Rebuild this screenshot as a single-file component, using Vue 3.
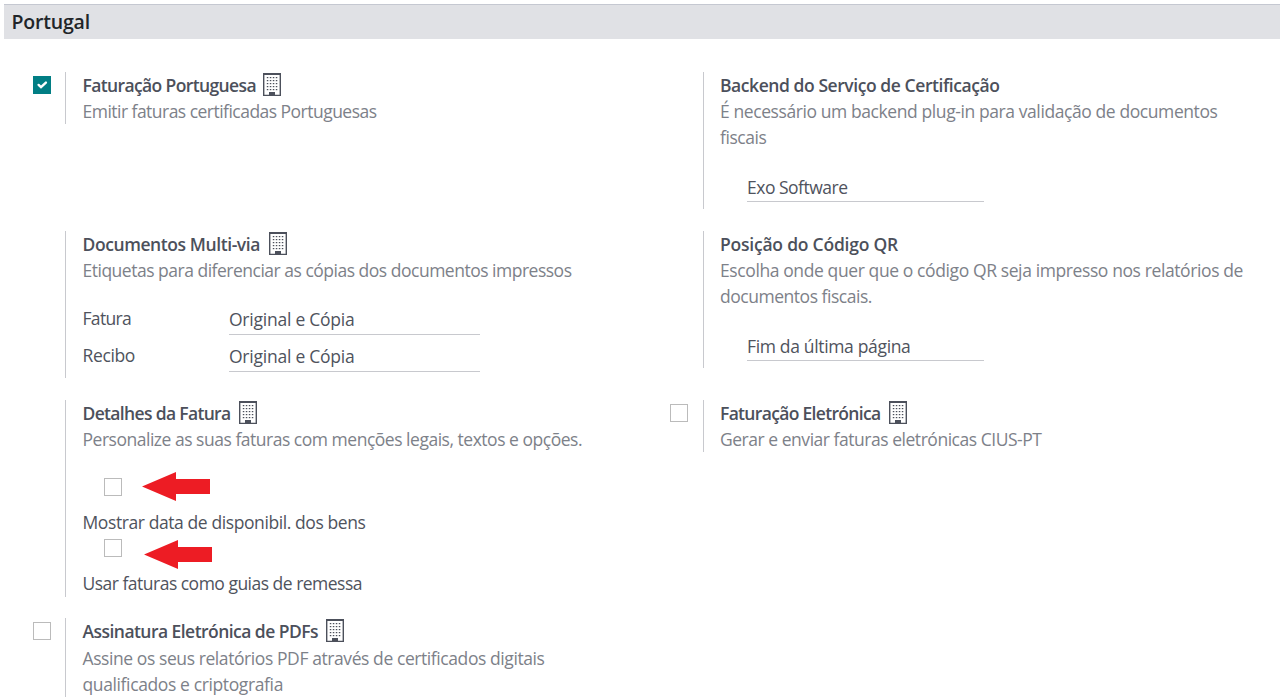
<script setup>
// Tracks a line of text so that it occupies the width given in its data.
const vFit = {
  mounted(el, { value }) {
    const natural = el.getBoundingClientRect().width
    el.style.letterSpacing = `${(value - natural) / el.textContent.length}px`
  },
}

const dots = [4, 7, 10, 13]
const dotRows = [4, 7, 10, 13, 16]

const settings = [
  {
    id: 'pt', check: 'on', company: true, title: ['Faturação Portuguesa', 173.5],
    help: [['Emitir faturas certificadas Portuguesas', 294]],
  },
  {
    id: 'backend', title: ['Backend do Serviço de Certificação', 279.5],
    help: [['É necessário um backend plug-in para validação de documentos', 497.5], ['fiscais', 46.5]],
    select: ['Exo Software', 100.5],
  },
  {
    id: 'copies', company: true, title: ['Documentos Multi-via', 177.5],
    help: [['Etiquetas para diferenciar as cópias dos documentos impressos', 489]],
    fields: [
      { label: ['Fatura', 48.5], value: ['Original e Cópia', 125.5] },
      { label: ['Recibo', 52.5], value: ['Original e Cópia', 125.5] },
    ],
  },
  {
    id: 'qr', title: ['Posição do Código QR', 178],
    help: [['Escolha onde quer que o código QR seja impresso nos relatórios de', 523], ['documentos fiscais.', 152]],
    select: ['Fim da última página', 163.5],
  },
  {
    id: 'details', company: true, title: ['Detalhes da Fatura', 148],
    help: [['Personalize as suas faturas com menções legais, textos e opções.', 499.5]],
    options: [['Mostrar data de disponibil. dos bens', 283], ['Usar faturas como guias de remessa', 279.5]],
  },
  {
    id: 'einvoice', check: 'off', company: true, title: ['Faturação Eletrónica', 160.5],
    help: [['Gerar e enviar faturas eletrónicas CIUS-PT', 321.5]],
  },
  {
    id: 'sign', check: 'off', company: true, title: ['Assinatura Eletrónica de PDFs', 235.5],
    help: [['Assine os seus relatórios PDF através de certificados digitais', 462], ['qualificados e criptografia', 200.5]],
  },
]
</script>

<template>
  <main class="page">
    <h2 class="bar"><span v-fit="78.5">Portugal</span></h2>
    <div class="grid">
      <section v-for="s in settings" :key="s.id" class="setting" :class="s.id">
        <div class="left">
          <span v-if="s.check" class="box" :class="s.check">
            <svg v-if="s.check === 'on'" width="18" height="18" viewBox="0 0 18 18">
              <path d="M5.6 8.9 8 11.2 12.9 6.6" fill="none" stroke="#fff" stroke-width="2.4" stroke-linecap="round" />
            </svg>
          </span>
        </div>
        <div class="right">
          <div class="title">
            <span v-fit="s.title[1]">{{ s.title[0] }}</span>
            <svg v-if="s.company" class="building" width="18" height="23" viewBox="0 0 18 23">
              <path d="M0 0H18V23H0ZM1.4 2V21.7H6V19H12V21.7H16.6V2Z" fill="#4c505b" fill-rule="evenodd" />
              <template v-for="y in dotRows" :key="y">
                <rect v-for="x in dots" :key="x" :x="x - 0.2" :y="y" width="1.5" height="1.2" fill="#4c505b" />
              </template>
            </svg>
          </div>
          <div v-for="h in s.help" :key="h[0]" class="help"><span v-fit="h[1]">{{ h[0] }}</span></div>
          <div v-if="s.select" class="input select"><span v-fit="s.select[1]">{{ s.select[0] }}</span></div>
          <div v-if="s.fields" class="fields">
            <div v-for="f in s.fields" :key="f.label[0]" class="field">
              <div class="label"><span v-fit="f.label[1]">{{ f.label[0] }}</span></div>
              <div class="input"><span v-fit="f.value[1]">{{ f.value[0] }}</span></div>
            </div>
          </div>
          <div v-if="s.options" class="options">
            <div v-for="o in s.options" :key="o[0]" class="option">
              <div class="mark">
                <span class="box off"></span>
                <svg class="arrow" width="68" height="30" viewBox="0 0 68 30">
                  <path d="M0 14.5 34 0V7H68V22H34V29Z" fill="#ed1c24" />
                </svg>
              </div>
              <div class="caption"><span v-fit="o[1]">{{ o[0] }}</span></div>
            </div>
          </div>
        </div>
      </section>
    </div>
  </main>
</template>

<style>
body { background: #fff; overflow: hidden; }
</style>

<style scoped>
.page {
  box-sizing: border-box;
  height: 697px;
  padding: 4px 4px 0;
  overflow: hidden;
  font-family: "Open Sans", "Noto Sans", sans-serif;
  font-size: 17.5px;
  font-weight: 400;
  font-stretch: 93%;
  line-height: 26px;
  color: #4f535d;
}
span { white-space: nowrap; }
.bar {
  box-sizing: border-box;
  height: 35px;
  margin: 0;
  padding-left: 7.5px;
  border-top: 1px solid #c5c8d1;
  background: #e0e1e5;
  color: #212529;
  font-size: 19.5px;
  font-weight: 600;
  line-height: 34px;
}
.grid {
  display: grid;
  grid-template-columns: 638px 1fr;
  grid-template-rows: 137px 147px 196px 80px;
  row-gap: 22px;
  padding-top: 33px;
}
.setting { display: flex; align-items: flex-start; }
.left { width: 61px; flex: none; padding: 4px 0 0 29px; box-sizing: border-box; }
.einvoice .left { padding-left: 28px; }
.box { display: block; box-sizing: border-box; width: 18px; height: 18px; flex: none; }
.box svg { display: block; }
.on { background: #017e84; }
.off { border: 1px solid #bbb; background: #fff; }
.right {
  box-sizing: border-box;
  flex: 1;
  border-left: 1px solid #c8c9ce;
  padding-left: 16.5px;
}
.backend .right, .qr .right, .einvoice .right { padding-left: 16px; }
.title { display: flex; height: 26px; font-weight: 600; color: #4c505b; }
.sign .title { height: 27px; }
.building { flex: none; margin: 1px 0 0 8px; }
.pt .building { margin-left: 7.4px; }
.copies .building { margin-left: 8.5px; }
.help { height: 26px; color: #7d8189; }
.input {
  box-sizing: border-box;
  height: 29px;
  border-bottom: 1px solid #c8c9ce;
  line-height: 28px;
}
.select { width: 237px; margin: 23px 0 7px 27px; }
.fields { padding-top: 20px; }
.field { display: flex; height: 37px; }
.field + .field { height: 38px; }
.field .label { width: 146.5px; margin-top: 2px; }
.field .input { width: 251px; height: 32px; padding-top: 3px; line-height: 27px; }
.options { padding-top: 20px; height: 125px; }
.option { height: 61px; }
.mark { display: flex; height: 38px; padding-left: 21.5px; }
.mark .box { margin-top: 6px; }
.arrow { margin-left: 20px; }
.option + .option .arrow { margin: 7px 0 0 22px; }
.caption { height: 23px; line-height: 24px; }
</style>
